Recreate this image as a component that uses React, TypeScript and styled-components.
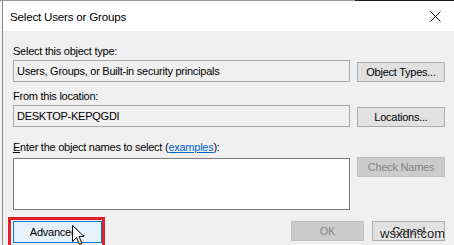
import React from "react";
import styled, { createGlobalStyle } from "styled-components";

const Global = createGlobalStyle`
  html, body { margin: 0; padding: 0; background: #f4f4f4; }
  body { font-family: "Liberation Sans", Arial, sans-serif; font-size: 11px; letter-spacing: -0.25px; color: #000; }
  #root { width: 454px; height: 245px; overflow: hidden; }
`;

const Screen = styled.div`
  position: relative;
  width: 454px;
  height: 245px;
  overflow: hidden;
  display: flex;
  flex-direction: column;
`;

const TopStrip = styled.div`
  display: flex;
  height: 1px;
  flex: none;
`;

const StripPart = styled.div<{ $w: number; $c: string }>`
  width: ${(p) => p.$w}px;
  flex: ${(p) => (p.$w ? "none" : "1")};
  background: ${(p) => p.$c};
`;

const Window = styled.div`
  flex: 1;
  margin-left: 2px;
  border-left: 1px solid #8a8a8a;
  display: flex;
  flex-direction: column;
  background: #f0f0f0;
`;

const TitleBar = styled.div`
  height: 30px;
  background: #ffffff;
  display: flex;
  align-items: center;
  justify-content: space-between;
  padding: 0 13px 0 7px;
  flex: none;
`;

const Title = styled.div`
  font-size: 11.6px;
  letter-spacing: -0.2px;
  padding-top: 1px;
`;

const Content = styled.div`
  display: flex;
  flex-direction: column;
  padding: 13px 9px 0 10px;
`;

const Label = styled.div<{ $mt?: number }>`
  height: 14px;
  line-height: 14px;
  margin-top: ${(p) => p.$mt ?? 0}px;
`;

const Row = styled.div<{ $mt: number }>`
  display: flex;
  align-items: flex-start;
  gap: 7px;
  margin-top: ${(p) => p.$mt}px;
`;

const Field = styled.div<{ $h: number; $white?: boolean }>`
  width: 337px;
  height: ${(p) => p.$h}px;
  box-sizing: border-box;
  border: 1px solid ${(p) => (p.$white ? "#7a7a7a" : "#a8a8a8")};
  background: ${(p) => (p.$white ? "#ffffff" : "#f0f0f0")};
  padding: 3px 3px;
  line-height: 14px;
  flex: none;
`;

const Button = styled.div<{ $w: number; $disabled?: boolean; $hot?: boolean; $mt?: number }>`
  width: ${(p) => p.$w}px;
  height: ${(p) => (p.$hot ? 22 : 20)}px;
  margin-top: ${(p) => p.$mt ?? 0}px;
  box-sizing: border-box;
  flex: none;
  display: flex;
  align-items: center;
  justify-content: center;
  border: 1px solid ${(p) => (p.$hot ? "#0078d7" : p.$disabled ? "#bfbfbf" : "#adadad")};
  background: ${(p) => (p.$hot ? "#e5f1fb" : p.$disabled ? "#cccccc" : "#e1e1e1")};
  color: ${(p) => (p.$disabled ? "#838383" : "#000")};
`;

const Link = styled.span`
  color: #0066cc;
  text-decoration: underline;
`;

const Accel = styled.span`
  text-decoration: underline;
`;

const Footer = styled.div`
  display: flex;
  align-items: flex-start;
  margin-top: 7px;
  padding-right: 9px;
`;

const Highlight = styled.div`
  border: 3px solid #e0202a;
  border-bottom: none;
  padding: 1px 0 0 2px;
  margin-left: 5px;
  height: 28px;
  box-sizing: border-box;
  flex: none;
`;

const Spacer = styled.div`
  flex: 1;
`;

const FooterButtons = styled.div`
  display: flex;
  gap: 8px;
  margin-top: 4px;
`;

const Cursor = styled.svg`
  position: absolute;
  left: 72px;
  top: 225px;
`;

const Watermark = styled.div`
  position: absolute;
  left: 380px;
  top: 226px;
  font-family: "Liberation Sans", Arial, sans-serif;
  font-size: 13px;
  letter-spacing: 0;
  color: #111;
  text-shadow: 0 0 2px #fff, 0 0 2px #fff;
`;

export default function App() {
  return (
    <Screen>
      <Global />
      <TopStrip>
        <StripPart $w={355} $c="#9a9a9a" />
        <StripPart $w={0} $c="#1a1a1a" />
      </TopStrip>
      <Window>
        <TitleBar>
          <Title>Select Users or Groups</Title>
          <svg width="11" height="11" viewBox="0 0 11 11">
            <path d="M0.5 0.5 L10.5 10.5 M10.5 0.5 L0.5 10.5" stroke="#111" strokeWidth="1" />
          </svg>
        </TitleBar>
        <Content>
          <Label>Select this object type:</Label>
          <Row $mt={2}>
            <Field $h={22}>Users, Groups, or Built-in security principals</Field>
            <Button $w={88} $mt={2}>Object Types...</Button>
          </Row>
          <Label $mt={7}>From this location:</Label>
          <Row $mt={2}>
            <Field $h={22}>DESKTOP-KEPQGDI</Field>
            <Button $w={88} $mt={2}>Locations...</Button>
          </Row>
          <Label $mt={13}>
            <Accel>E</Accel>nter the object names to select (<Link>examples</Link>):
          </Label>
          <Row $mt={4}>
            <Field $h={52} $white />
            <Button $w={88} $disabled $mt={-1}>Check Names</Button>
          </Row>
        </Content>
        <Footer>
          <Highlight>
            <Button $w={89} $hot>Advanced...</Button>
          </Highlight>
          <Spacer />
          <FooterButtons>
            <Button $w={73} $disabled>OK</Button>
            <Button $w={73}>Cancel</Button>
          </FooterButtons>
        </Footer>
      </Window>
      <Cursor width="13" height="21" viewBox="0 0 13 21">
        <path d="M0.5 0.5 L0.5 16.5 L4.5 12.5 L7.5 19.5 L10 18.5 L7 11.5 L12 11.5 Z" fill="#fff" stroke="#000" strokeWidth="1" />
      </Cursor>
      <Watermark>wsxdn.com</Watermark>
    </Screen>
  );
}
